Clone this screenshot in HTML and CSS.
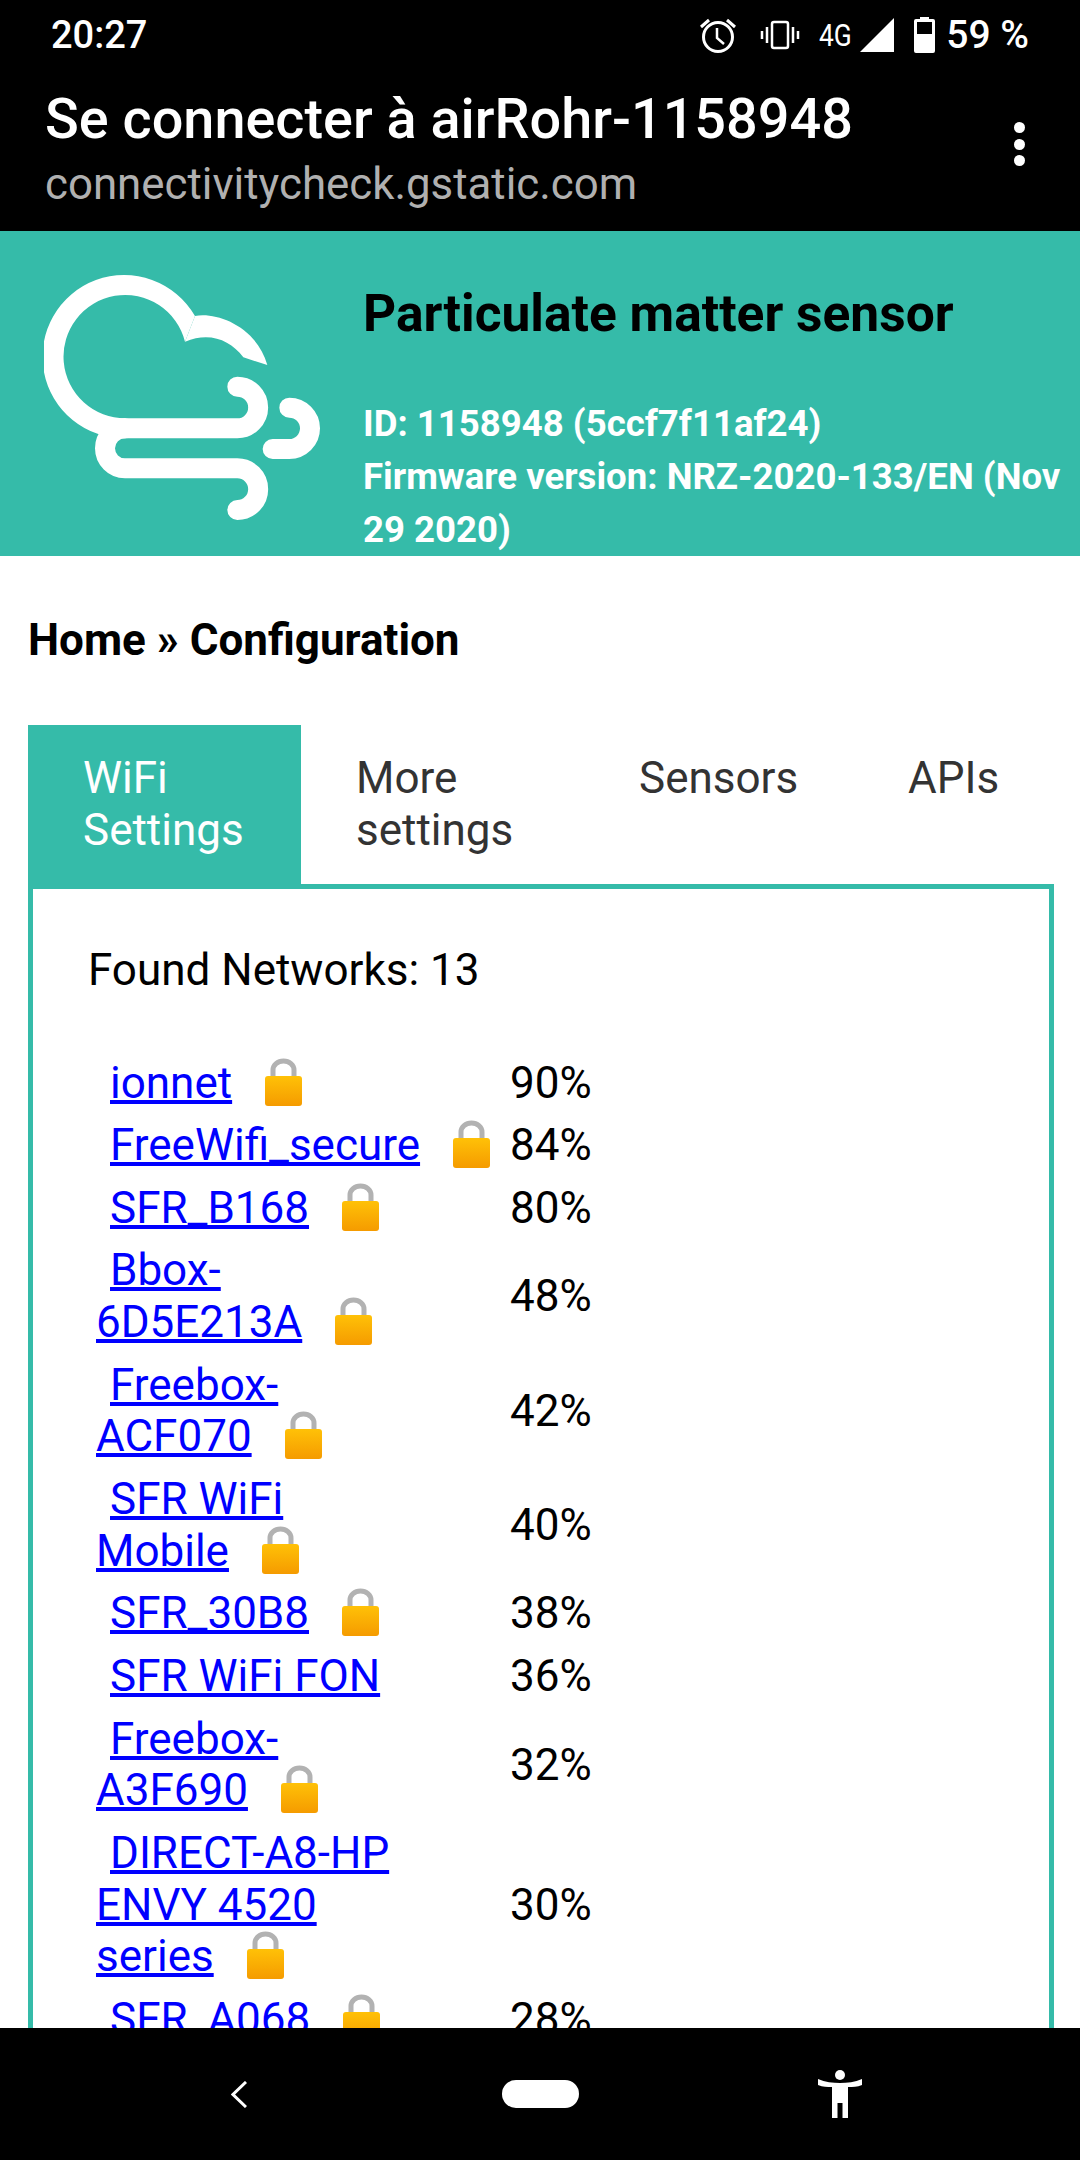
FILE: index.html
```html
<!DOCTYPE html>
<html lang="en">
<head>
    <meta charset="UTF-8">
    <title>Particulate matter sensor</title>
    <link rel="stylesheet" href="styles.css">
</head>
<body>

    <svg class="defs" width="0" height="0">
        <defs>
            <linearGradient id="lockBody" x1="0" y1="0" x2="0" y2="1">
                <stop offset="0" stop-color="#ffc107"/>
                <stop offset="1" stop-color="#f59b00"/>
            </linearGradient>
            <symbol id="lock" viewBox="0 0 37 48">
                <path d="M8 20V12a10.500 9 0 0 1 21 0V20" fill="none" stroke="#b2b2b2" stroke-width="5"/>
                <rect x="0" y="18" width="37" height="30" rx="3" fill="url(#lockBody)"/>
            </symbol>
        </defs>
    </svg>

    <div class="phone">
        <div class="status">
            <span class="clock">20:27</span>
            <div class="status-icons">
                <svg class="ico-alarm" width="36" height="36" viewBox="0 0 36 36">
                    <circle cx="18" cy="20" r="14.500" fill="none" stroke="#fff" stroke-width="3"/>
                    <path d="M17 11V21L24 27" fill="none" stroke="#fff" stroke-width="2.500"/>
                    <path d="M1 10L9 3M35 10L27 3" fill="none" stroke="#fff" stroke-width="3"/>
                </svg>
                <svg class="ico-vibrate" width="40" height="30" viewBox="0 0 40 30">
                    <rect x="12" y="2" width="16" height="26" rx="2" fill="none" stroke="#fff" stroke-width="2.500"/>
                    <path d="M7 7V23M2 11V19M33 7V23M38 11V19" fill="none" stroke="#fff" stroke-width="2.500"/>
                </svg>
                <span class="net">4G</span>
                <svg class="ico-signal" width="34" height="34" viewBox="0 0 34 34">
                    <path d="M0 34L34 0V34Z" fill="#fff"/>
                </svg>
                <svg class="ico-battery" width="21" height="36" viewBox="0 0 21 36">
                    <path d="M6 0H15V2H19a2 2 0 0 1 2 2V34a2 2 0 0 1 -2 2H2a2 2 0 0 1 -2 -2V4a2 2 0 0 1 2 -2H6ZM3 5V17H18V5Z" fill="#fff" fill-rule="evenodd"/>
                </svg>
                <span class="percent">59 %</span>
            </div>
        </div>

        <div class="titlebar">
            <div>
                <div class="titlebar-main">Se connecter à airRohr-1158948</div>
                <div class="titlebar-sub">connectivitycheck.gstatic.com</div>
            </div>
            <div class="dots"><i></i><i></i><i></i></div>
        </div>

        <main class="page">
            <header class="sensor-head">
                <svg class="logo" width="276" height="245" viewBox="132 105 828 735">
                    <path d="M712 440A62.500 62.500 0 0 1 712 565H375" fill="none" stroke="#fff" stroke-width="60" stroke-linecap="round"/>
                    <path d="M377 595A245 245 0 1 1 585 228L555 305A185 185 0 1 0 377 535Z" fill="#fff"/>
                    <path d="M375 565A60 60 0 0 0 375 685H712A62.500 62.500 0 0 1 712 810" fill="none" stroke="#fff" stroke-width="60" stroke-linecap="round"/>
                    <path d="M868 503A62 62 0 0 1 868 627H818" fill="none" stroke="#fff" stroke-width="60" stroke-linecap="round"/>
                    <path d="M585 228C650 215 770 260 802 375L730 352C690 300 630 275 555 305Z" fill="#fff"/>
                </svg>
                <div class="head-text">
                    <h1>Particulate matter sensor</h1>
                    <p>ID: 1158948 (5ccf7f11af24)<br>Firmware version: NRZ-2020-133/EN (Nov 29 2020)</p>
                </div>
            </header>

            <div class="content">
                <h2 class="crumbs">Home » Configuration</h2>

                <div class="tabs">
                    <div class="tab active">WiFi<br>Settings</div>
                    <div class="tab">More<br>settings</div>
                    <div class="tab">Sensors</div>
                    <div class="tab">APIs</div>
                </div>

                <div class="panel">
                    <p class="found">Found Networks: 13</p>
                    <table class="networks">
                        <tr><td class="name"><a href="#">ionnet</a><svg class="lock"><use href="#lock"/></svg></td><td>90%</td></tr>
                        <tr><td class="name"><a href="#">FreeWifi_secure</a><svg class="lock"><use href="#lock"/></svg></td><td>84%</td></tr>
                        <tr><td class="name"><a href="#">SFR_B168</a><svg class="lock"><use href="#lock"/></svg></td><td>80%</td></tr>
                        <tr><td class="name"><a href="#">Bbox-<br>6D5E213A</a><svg class="lock"><use href="#lock"/></svg></td><td>48%</td></tr>
                        <tr><td class="name"><a href="#">Freebox-<br>ACF070</a><svg class="lock"><use href="#lock"/></svg></td><td>42%</td></tr>
                        <tr><td class="name"><a href="#">SFR WiFi<br>Mobile</a><svg class="lock"><use href="#lock"/></svg></td><td>40%</td></tr>
                        <tr><td class="name"><a href="#">SFR_30B8</a><svg class="lock"><use href="#lock"/></svg></td><td>38%</td></tr>
                        <tr><td class="name"><a href="#">SFR WiFi FON</a></td><td>36%</td></tr>
                        <tr><td class="name"><a href="#">Freebox-<br>A3F690</a><svg class="lock"><use href="#lock"/></svg></td><td>32%</td></tr>
                        <tr><td class="name"><a href="#">DIRECT-A8-HP<br>ENVY 4520<br>series</a><svg class="lock"><use href="#lock"/></svg></td><td>30%</td></tr>
                        <tr><td class="name"><a href="#">SFR_A068</a><svg class="lock"><use href="#lock"/></svg></td><td>28%</td></tr>
                    </table>
                </div>
            </div>
        </main>

        <nav class="navbar">
            <svg class="nav-back" width="16" height="27" viewBox="0 0 16 27">
                <path d="M15 1L2 13.500L15 26" fill="none" stroke="#fff" stroke-width="3"/>
            </svg>
            <div class="nav-home"></div>
            <svg class="nav-a11y" width="44" height="48" viewBox="0 0 44 48">
                <ellipse cx="22" cy="5" rx="5" ry="5" fill="#fff"/>
                <path d="M0 9C7 12 15 13 22 13C29 13 37 12 44 9V15C39 17 35 17 30 17V48H24.500V33H19.500V48H14V17C9 17 5 17 0 15Z" fill="#fff"/>
            </svg>
        </nav>
    </div>

</body>
</html>
```

FILE: styles.css
```css
body {
    margin: 0;
    font-family: Roboto, "Noto Sans", sans-serif;
    background: white;
    color: black;
}

.defs {
    position: absolute;
}

.phone {
    width: 1080px;
    height: 2160px;
    display: flex;
    flex-direction: column;
    overflow: hidden;
}

.status {
    height: 70px;
    flex: none;
    background: black;
    color: white;
    display: flex;
    justify-content: space-between;
    align-items: center;
    padding: 0 51px 0 51px;
    box-sizing: border-box;
}

.clock {
    font-size: 38px;
    font-weight: 500;
}

.status-icons {
    display: flex;
    align-items: center;
}

.ico-alarm {
    margin-right: 24px;
}

.ico-vibrate {
    margin-right: 19px;
}

.net {
    font-size: 31px;
    width: 41px;
    transform: scaleX(0.85);
    transform-origin: left center;
}

.ico-signal {
    margin-right: 20px;
}

.ico-battery {
    margin-right: 11px;
}

.percent {
    font-size: 39px;
    font-weight: 500;
}

.titlebar {
    height: 161px;
    flex: none;
    background: black;
    color: white;
    display: flex;
    justify-content: space-between;
    padding: 19px 55px 0 45px;
    box-sizing: border-box;
}

.titlebar-main {
    font-size: 55.8px;
    font-weight: 500;
    line-height: 60px;
}

.titlebar-sub {
    font-size: 43.8px;
    line-height: 50px;
    margin-top: 10px;
    color: #b0b0b0;
}

.dots {
    display: flex;
    flex-direction: column;
    gap: 5.5px;
    padding-top: 33px;
}

.dots i {
    display: block;
    width: 11px;
    height: 11px;
    border-radius: 50%;
    background: white;
}

.page {
    flex: 1;
    min-height: 0;
    overflow: hidden;
}

.sensor-head {
    background: #35bba9;
    height: 325px;
    box-sizing: border-box;
    display: flex;
    padding: 44px 0 0 44px;
}

.logo {
    flex: none;
}

.head-text {
    margin-left: 43px;
    margin-top: 9px;
}

.head-text h1 {
    margin: 0;
    font-size: 51.5px;
    font-weight: 700;
    line-height: 60px;
}

.head-text p {
    margin: 54px 0 0 0;
    font-size: 36.6px;
    font-weight: 700;
    line-height: 52.8px;
    color: white;
}

.content {
    padding: 0 26px 0 28px;
}

.crumbs {
    margin: 0;
    padding-top: 58px;
    font-size: 44px;
    font-weight: 700;
    line-height: 52px;
}

.tabs {
    display: grid;
    grid-template-columns: 273px 283px 269px auto;
    margin-top: 59px;
}

.tab {
    padding: 27px 0 28px 55px;
    font-size: 44px;
    line-height: 52px;
    color: #333;
}

.tab.active {
    background: #35bba9;
    color: white;
}

.panel {
    border: 5.5px solid #35bba9;
    padding: 55px 55px;
}

.found {
    margin: 0 0 56px 0;
    font-size: 44px;
    line-height: 52px;
}

.networks {
    border-collapse: collapse;
    margin-left: 8px;
    font-size: 44px;
    line-height: 51.66px;
}

.networks td {
    padding: 5.5px 0;
}

.networks .name {
    width: 414px;
    white-space: nowrap;
    text-indent: 14px;
}

.networks a {
    color: #0000ff;
    text-decoration-thickness: 4px;
}

.lock {
    width: 37px;
    height: 48px;
    margin-left: 33px;
    vertical-align: -8px;
}

.navbar {
    height: 132px;
    flex: none;
    background: black;
    position: relative;
}

.navbar > * {
    position: absolute;
}

.nav-back {
    left: 231px;
    top: 53px;
}

.nav-home {
    left: 502px;
    top: 52px;
    width: 77px;
    height: 28px;
    border-radius: 14px;
    background: white;
}

.nav-a11y {
    left: 818px;
    top: 42px;
}
```
